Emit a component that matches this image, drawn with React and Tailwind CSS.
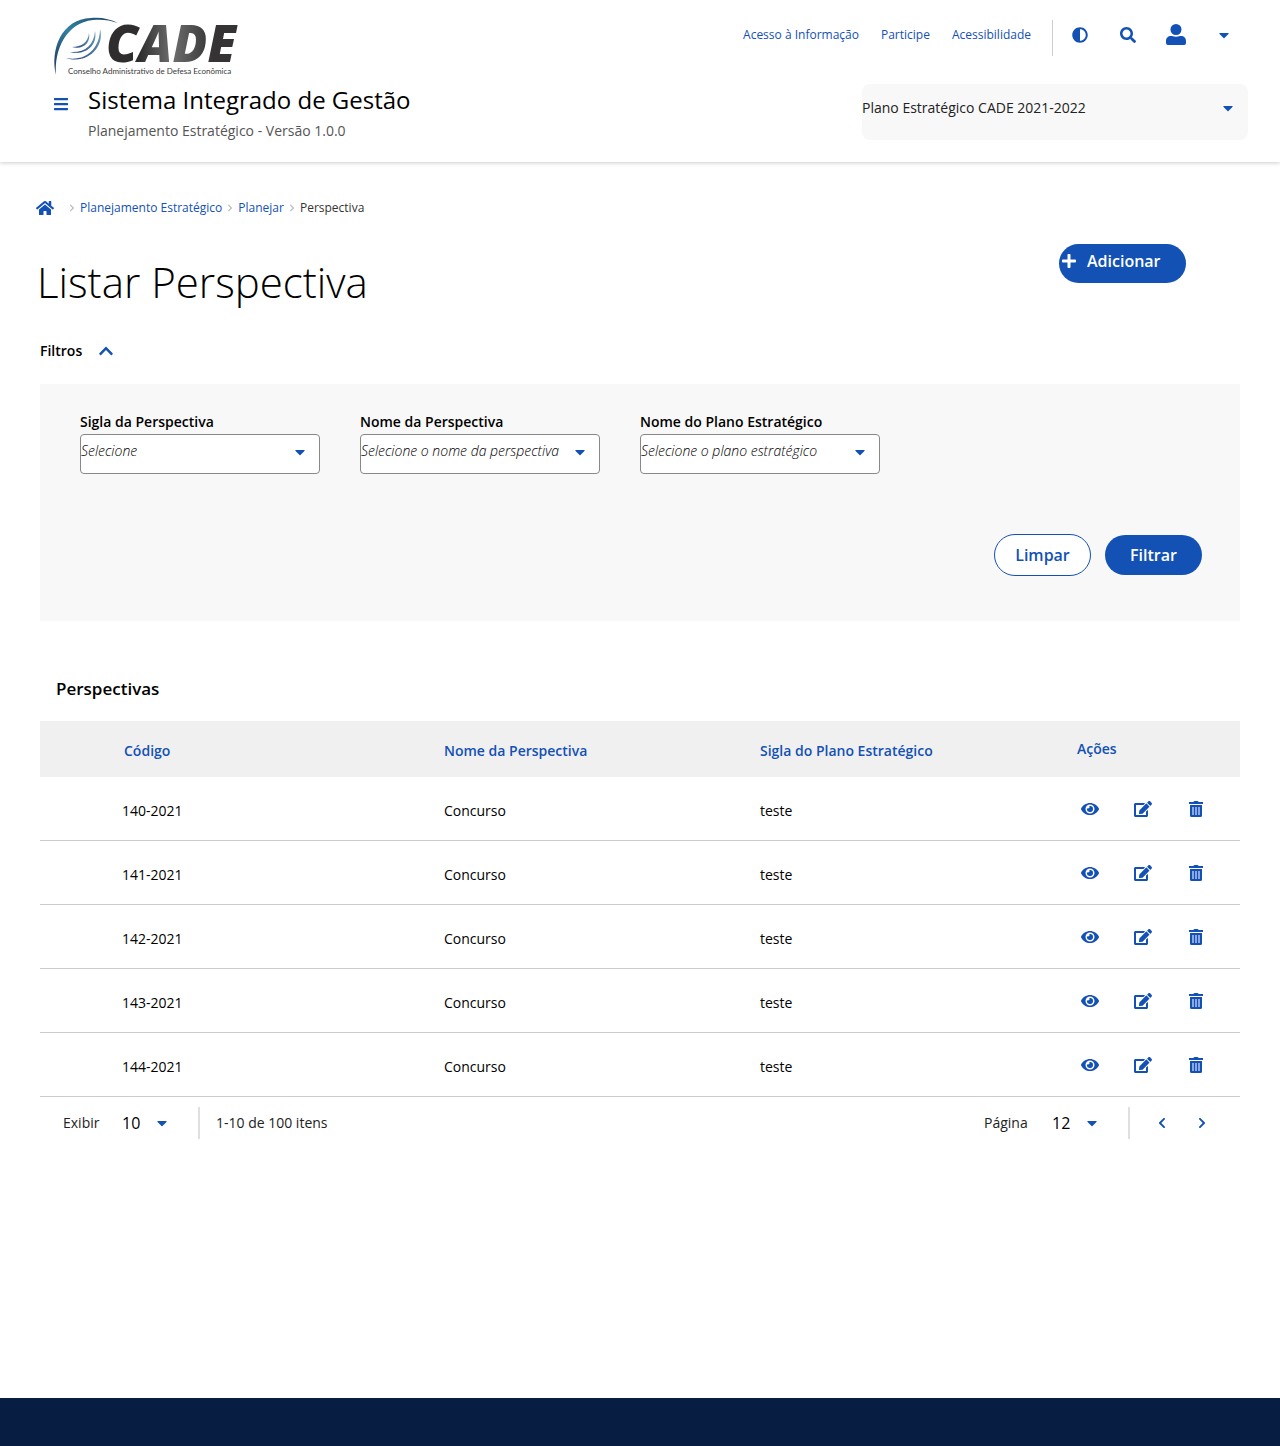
import {
  FaAdjust,
  FaBars,
  FaCaretDown,
  FaChevronLeft,
  FaChevronRight,
  FaChevronUp,
  FaEdit,
  FaEye,
  FaHome,
  FaPlus,
  FaSearch,
} from "react-icons/fa";

const ROWS = ["140-2021", "141-2021", "142-2021", "143-2021", "144-2021"];

function Logo() {
  return (
    <svg
      className="h-[60px] w-[186px] overflow-visible font-['Open_Sans',sans-serif]"
      viewBox="0 0 186 60"
      role="img"
      aria-label="CADE"
    >
      <defs>
        <linearGradient id="letters" x1="0" y1="0" x2="1" y2="0">
          <stop offset="0.25" stopColor="#2f2d2e" />
          <stop offset="0.5" stopColor="#6e6e6e" />
          <stop offset="0.8" stopColor="#353334" />
        </linearGradient>
        <linearGradient id="arc" x1="0" y1="1" x2="1" y2="0">
          <stop offset="0" stopColor="#1d3058" />
          <stop offset="0.5" stopColor="#3182a0" />
          <stop offset="1" stopColor="#1d3d66" />
        </linearGradient>
        <linearGradient id="wave" x1="0" y1="1" x2="1" y2="0">
          <stop offset="0" stopColor="#243f86" />
          <stop offset="1" stopColor="#6ea3b8" />
        </linearGradient>
      </defs>
      <path
        d="M3 59 C-3 34 8 3 38 2 C48 1 57 3 65 7 C57 4 48 3 40 4 C13 7 1 34 3 59 Z"
        fill="url(#arc)"
      />
      <path d="M47 13 C52 30 35 49 13 42 C33 46 47 32 47 13 Z" fill="url(#wave)" />
      <path d="M42 15 C45 29 33 40 17 36 C32 37 41 29 42 15 Z" fill="url(#wave)" />
      <path d="M36 17 C38 27 30 34 19 31 C29 31 35 26 36 17 Z" fill="url(#wave)" />
      <text x="53" y="46" fontSize="51" fontWeight="800" fontStyle="italic" fill="url(#letters)">
        CADE
      </text>
      <text x="15" y="58" fontSize="8" fill="#3a3a3a" className="font-[Lato]">
        Conselho Administrativo de Defesa Econômica
      </text>
    </svg>
  );
}

function UserIcon() {
  return (
    <svg className="h-[21px] w-5" viewBox="0 0 20 21" fill="currentColor" aria-hidden="true">
      <circle cx="10" cy="5.500" r="5.500" />
      <path d="M5 12 H6 C8.500 13 11.500 13 14 12 H15 C18 12 20 14 20 17 V19 Q20 21 18 21 H2 Q0 21 0 19 V17 C0 14 2 12 5 12 Z" />
    </svg>
  );
}

function TrashIcon() {
  return (
    <svg className="h-4 w-3.5" viewBox="0 0 14 16" fill="currentColor" aria-hidden="true">
      <path d="M4.500 1 Q4.700 0 5.500 0 H8.500 Q9.300 0 9.500 1 H14 V3 H0 V1 Z" />
      <path d="M1 4 H13 V14.500 Q13 16 11.500 16 H2.500 Q1 16 1 14.500 Z" />
      <path d="M3 6 H5 V14 H3 Z M6 6 H8 V14 H6 Z M9 6 H11 V14 H9 Z" fill="#8ca8dc" />
    </svg>
  );
}

function Select({ options, label, id, wrapClass, selectClass, caretClass }) {
  return (
    <div className={`relative ${wrapClass}`}>
      <select id={id} aria-label={label} className={`w-full appearance-none ${selectClass}`}>
        {options.map((option) => (
          <option key={option}>{option}</option>
        ))}
      </select>
      <FaCaretDown className={`pointer-events-none absolute size-4 text-[#1351b4] ${caretClass}`} />
    </div>
  );
}

function Field({ id, label, placeholder }) {
  return (
    <div className="w-60">
      <label htmlFor={id} className="block text-sm leading-5 font-semibold">
        {label}
      </label>
      <Select
        id={id}
        options={[placeholder]}
        wrapClass="mt-0.5"
        selectClass="h-10 rounded border border-[#888] bg-white pb-1.5 text-sm font-light italic text-black"
        caretClass="right-3 top-2.5"
      />
    </div>
  );
}

function Header() {
  const iconButton = "flex w-12 items-center justify-center";
  return (
    <header className="flex flex-wrap justify-between bg-white pr-8 pb-5 pl-[53px] shadow-[0_1px_4px_rgba(0,0,0,0.2)]">
      <div className="pt-4">
        <Logo />
        <div className="mt-2 flex items-start">
          <button type="button" aria-label="Menu" className="mt-3 w-[35px] text-[#1351b4]">
            <FaBars className="size-4" />
          </button>
          <div>
            <p className="text-2xl leading-8">Sistema Integrado de Gestão</p>
            <p className="mt-1 text-sm leading-[22px] text-[#555]">Planejamento Estratégico - Versão 1.0.0</p>
          </div>
        </div>
      </div>
      <div className="flex flex-col items-end gap-7 pt-5">
        <div className="flex h-9 items-stretch text-[#1351b4]">
          <nav className="flex gap-[22px] pt-[7px] pr-[21px] text-xs leading-4 font-medium">
            <a href="#informacao">Acesso à Informação</a>
            <a href="#participe">Participe</a>
            <a href="#acessibilidade">Acessibilidade</a>
          </nav>
          <div className="mr-[3px] w-px bg-[#ccc]" />
          <div className="flex h-[29px]">
            <button type="button" aria-label="Contraste" className={iconButton}>
              <FaAdjust className="size-4" />
            </button>
            <button type="button" aria-label="Pesquisar" className={iconButton}>
              <FaSearch className="size-4" />
            </button>
            <button type="button" aria-label="Usuário" className={iconButton}>
              <UserIcon />
            </button>
            <button type="button" aria-label="Opções do usuário" className={iconButton}>
              <FaCaretDown className="size-4" />
            </button>
          </div>
        </div>
        <Select
          label="Plano estratégico"
          options={["Plano Estratégico CADE 2021-2022"]}
          wrapClass="w-[386px]"
          selectClass="h-14 rounded-lg bg-[#f8f8f8] pb-2 text-sm text-[#222]"
          caretClass="right-3 top-4"
        />
      </div>
    </header>
  );
}

function Breadcrumb() {
  const separator = "mx-1 size-2 text-[#bbb]";
  return (
    <nav aria-label="Trilha" className="flex h-4 items-center px-9 text-xs text-[#1351b4]">
      <a href="#inicio" aria-label="Início" className="mr-2.5">
        <FaHome className="size-[18px]" />
      </a>
      <FaChevronRight className={separator} />
      <a href="#planejamento">Planejamento Estratégico</a>
      <FaChevronRight className={separator} />
      <a href="#planejar">Planejar</a>
      <FaChevronRight className={separator} />
      <span className="text-[#333]">Perspectiva</span>
    </nav>
  );
}

function Filters() {
  return (
    <form className="mx-10 mt-[21px] bg-[#f8f8f8] pt-7 pr-[38px] pb-[45px] pl-10">
      <div className="flex flex-wrap gap-10">
        <Field id="sigla" label="Sigla da Perspectiva" placeholder="Selecione" />
        <Field id="nome" label="Nome da Perspectiva" placeholder="Selecione o nome da perspectiva" />
        <Field id="plano" label="Nome do Plano Estratégico" placeholder="Selecione o plano estratégico" />
      </div>
      <div className="mt-[60px] flex items-center justify-end gap-3.5 text-base font-semibold">
        <button type="reset" className="h-[42px] w-[97px] rounded-full border border-[#1351b4] bg-white text-[#1351b4]">
          Limpar
        </button>
        <button type="button" className="h-10 w-[97px] rounded-full bg-[#1351b4] text-white">
          Filtrar
        </button>
      </div>
    </form>
  );
}

function PerspectiveTable() {
  return (
    <table className="mt-5 w-full table-fixed border-separate border-spacing-0 text-left text-sm">
      <colgroup>
        <col className="w-[404px]" />
        <col className="w-[316px]" />
        <col className="w-[317px]" />
        <col />
      </colgroup>
      <thead className="bg-[#f0f0f0] text-[#1351b4]">
        <tr className="h-14">
          <th className="pt-1 pl-[84px] font-semibold">Código</th>
          <th className="pt-1 font-semibold">Nome da Perspectiva</th>
          <th className="pt-1 font-semibold">Sigla do Plano Estratégico</th>
          <th className="font-semibold">Ações</th>
        </tr>
      </thead>
      <tbody>
        {ROWS.map((code) => (
          <tr key={code} className="h-16">
            <td className="border-b border-[#ccc] pt-1 pl-[82px]">{code}</td>
            <td className="border-b border-[#ccc] pt-1">Concurso</td>
            <td className="border-b border-[#ccc] pt-1">teste</td>
            <td className="border-b border-[#ccc]">
              <div className="flex gap-[35px] pl-1 text-[#1351b4]">
                <button type="button" aria-label={`Visualizar ${code}`} className="flex w-[18px] justify-center">
                  <FaEye className="h-4 w-[18px]" />
                </button>
                <button type="button" aria-label={`Editar ${code}`} className="flex w-[18px] justify-center">
                  <FaEdit className="h-4 w-[18px]" />
                </button>
                <button type="button" aria-label={`Excluir ${code}`} className="flex w-[18px] justify-center">
                  <TrashIcon />
                </button>
              </div>
            </td>
          </tr>
        ))}
      </tbody>
    </table>
  );
}

function Pagination() {
  const number = "h-8 text-base font-medium text-black";
  return (
    <div className="mt-2.5 flex h-8 items-center justify-between pr-[18px] pl-[23px] text-sm text-[#222]">
      <div className="flex h-8 items-center">
        <label htmlFor="exibir" className="w-[59px]">
          Exibir
        </label>
        <Select id="exibir" options={["10"]} wrapClass="w-12" selectClass={number} caretClass="right-0 top-2" />
        <div className="mx-4 ml-7 h-8 w-0.5 bg-[#e0e0e0]" />
        <span>1-10 de 100 itens</span>
      </div>
      <div className="flex h-8 items-center">
        <label htmlFor="pagina" className="w-[68px]">
          Página
        </label>
        <Select id="pagina" options={["12"]} wrapClass="w-12" selectClass={number} caretClass="right-0 top-2" />
        <div className="ml-7 h-8 w-0.5 bg-[#e0e0e0]" />
        <div className="ml-3 flex text-[#1351b4]">
          <button type="button" aria-label="Página anterior" className="flex w-10 justify-center">
            <FaChevronLeft className="size-3" />
          </button>
          <button type="button" aria-label="Próxima página" className="flex w-10 justify-center">
            <FaChevronRight className="size-3" />
          </button>
        </div>
      </div>
    </div>
  );
}

export default function App() {
  return (
    <div className="flex min-h-screen flex-col bg-white font-['Open_Sans',sans-serif] text-black">
      <Header />
      <main className="pt-[38px]">
        <Breadcrumb />
        <div className="mt-7 flex items-start justify-between pr-[94px] pl-[37px]">
          <h1 className="mt-3.5 text-[42px] leading-[48px] font-light">Listar Perspectiva</h1>
          <button
            type="button"
            className="flex h-[39px] w-[127px] items-center gap-2.5 rounded-full bg-[#1351b4] pb-1.5 pl-0.5 text-base font-semibold text-white"
          >
            <FaPlus className="size-4" />
            Adicionar
          </button>
        </div>
        <button type="button" aria-expanded="true" className="mt-[33px] ml-10 flex h-6 items-center text-sm font-semibold">
          Filtros
          <FaChevronUp className="ml-4 size-4 text-[#1351b4]" />
        </button>
        <Filters />
        <section className="mx-10 mt-14 mb-10">
          <h2 className="pl-4 text-[17px] leading-6 font-semibold">Perspectivas</h2>
          <PerspectiveTable />
          <Pagination />
        </section>
      </main>
      <footer className="mt-auto h-12 bg-[#071d41]" />
    </div>
  );
}
